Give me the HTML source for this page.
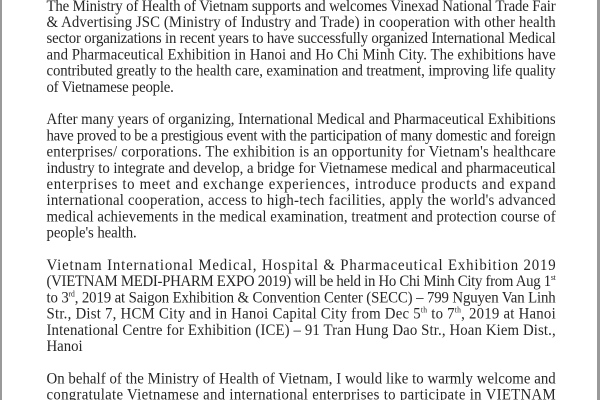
<!DOCTYPE html>
<html><head><meta charset="utf-8"><style>
html,body{margin:0;padding:0;background:#fff;}
body{width:600px;height:400px;overflow:hidden;position:relative;}
.bl{position:absolute;top:0;left:0;width:2px;height:400px;background:#9a9a9a;}
.br{position:absolute;top:0;right:0;width:3px;height:400px;background:#9a9a9a;}
svg{position:absolute;top:0;left:0;}
text{font-family:"Liberation Serif",serif;font-size:15.6px;fill:#262626;}
</style></head><body>
<div class="bl"></div><div class="br"></div>
<svg width="600" height="400" viewBox="0 0 600 400">
<g transform="translate(46.5 0) scale(0.95 1)">
<text x="0" y="10.8" textLength="536" lengthAdjust="spacing">The Ministry of Health of Vietnam supports and welcomes Vinexad National Trade Fair</text>
<text x="0" y="27" textLength="536" lengthAdjust="spacing">&amp; Advertising JSC (Ministry of Industry and Trade) in cooperation with other health</text>
<text x="0" y="43.2" textLength="536" lengthAdjust="spacing">sector organizations in recent years to have successfully organized International Medical</text>
<text x="0" y="59.4" textLength="536" lengthAdjust="spacing">and Pharmaceutical Exhibition in Hanoi and Ho Chi Minh City. The exhibitions have</text>
<text x="0" y="75.6" textLength="536" lengthAdjust="spacing">contributed greatly to the health care, examination and treatment, improving life quality</text>
<text x="0" y="91.8" textLength="134" lengthAdjust="spacing">of Vietnamese people.</text>

<text x="0" y="124.2" textLength="536" lengthAdjust="spacing">After many years of organizing, International Medical and Pharmaceutical Exhibitions</text>
<text x="0" y="140.4" textLength="536" lengthAdjust="spacing">have proved to be a prestigious event with the participation of many domestic and foreign</text>
<text x="0" y="156.6" textLength="536" lengthAdjust="spacing">enterprises/ corporations. The exhibition is an opportunity for Vietnam's healthcare</text>
<text x="0" y="172.8" textLength="536" lengthAdjust="spacing">industry to integrate and develop, a bridge for Vietnamese medical and pharmaceutical</text>
<text x="0" y="189" textLength="536" lengthAdjust="spacing">enterprises to meet and exchange experiences, introduce products and expand</text>
<text x="0" y="205.2" textLength="536" lengthAdjust="spacing">international cooperation, access to high-tech facilities, apply the world's advanced</text>
<text x="0" y="221.4" textLength="536" lengthAdjust="spacing">medical achievements in the medical examination, treatment and protection course of</text>
<text x="0" y="237.6" textLength="95" lengthAdjust="spacing">people's health.</text>

<text x="0" y="270" textLength="536" lengthAdjust="spacing">Vietnam International Medical, Hospital &amp; Pharmaceutical Exhibition 2019</text>
<text x="0" y="286.2" textLength="536" lengthAdjust="spacing">(VIETNAM MEDI-PHARM EXPO 2019) will be held in Ho Chi Minh City from Aug 1<tspan font-size="8" dy="-6">st</tspan></text>
<text x="0" y="302.4" textLength="536" lengthAdjust="spacing">to 3<tspan font-size="8" dy="-6">rd</tspan><tspan dy="6">, 2019 at Saigon Exhibition &amp; Convention Center (SECC) – 799 Nguyen Van Linh</tspan></text>
<text x="0" y="318.6" textLength="536" lengthAdjust="spacing">Str., Dist 7, HCM City and in Hanoi Capital City from Dec 5<tspan font-size="8" dy="-6">th</tspan><tspan dy="6"> to 7</tspan><tspan font-size="8" dy="-6">th</tspan><tspan dy="6">, 2019 at Hanoi</tspan></text>
<text x="0" y="334.8" textLength="536" lengthAdjust="spacing">Intenational Centre for Exhibition (ICE) – 91 Tran Hung Dao Str., Hoan Kiem Dist.,</text>
<text x="0" y="351" textLength="38" lengthAdjust="spacing">Hanoi</text>

<text x="0" y="383.4" textLength="536" lengthAdjust="spacing">On behalf of the Ministry of Health of Vietnam, I would like to warmly welcome and</text>
<text x="0" y="399.6" textLength="536" lengthAdjust="spacing">congratulate Vietnamese and international enterprises to participate in VIETNAM</text>
</g>
</svg>
</body></html>
